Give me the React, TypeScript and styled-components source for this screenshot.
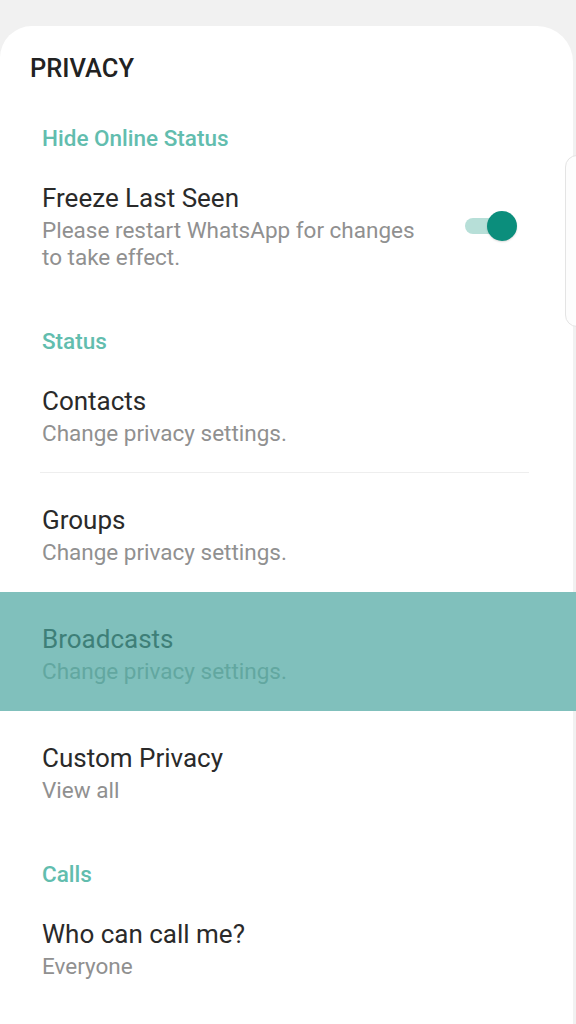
import React from "react";
import styled, { createGlobalStyle } from "styled-components";

const Global = createGlobalStyle`
  html, body { margin: 0; padding: 0; background: #f1f1f1; }
  body { font-family: Roboto, "Noto Sans", "Liberation Sans", sans-serif; -webkit-font-smoothing: antialiased; }
`;

const Page = styled.div`
  position: relative;
  width: 576px;
  height: 1024px;
  overflow: hidden;
  background: #f1f1f1;
  padding-top: 26px;
  box-sizing: border-box;
`;

const Card = styled.div`
  margin-right: 3px;
  background: #ffffff;
  border-radius: 32px 36px 0 0;
  min-height: 1000px;
`;

const EdgeTab = styled.div`
  position: absolute;
  left: 565px;
  top: 155px;
  width: 30px;
  height: 170px;
  border: 1px solid #e4e4e4;
  border-radius: 12px;
  background: #fdfdfd;
`;

const Title = styled.h1`
  margin: 0;
  padding: 31px 30px 15px;
  font-size: 25.5px;
  line-height: 22px;
  font-weight: 500;
  color: #222222;
`;

const SectionHeader = styled.div`
  padding: 33px 42px 2px;
  font-size: 22.5px;
  line-height: 22px;
  font-weight: 500;
  color: #62bdae;
`;

const Row = styled.div<{ $active?: boolean }>`
  display: flex;
  align-items: center;
  padding: 34px 56px 26px 42px;
  background: ${(p) => (p.$active ? "#80c0bc" : "transparent")};
  margin-right: ${(p) => (p.$active ? "-3px" : "0")};
`;

const Texts = styled.div`
  flex: 1;
  min-width: 0;
`;

const RowTitle = styled.div<{ $active?: boolean }>`
  font-size: 26px;
  line-height: 26px;
  color: ${(p) => (p.$active ? "#3e7f78" : "#2a2a2a")};
`;

const RowSub = styled.div<{ $active?: boolean }>`
  margin-top: 6px;
  font-size: 22.5px;
  line-height: 27px;
  color: ${(p) => (p.$active ? "#62a7a0" : "#909090")};
  max-width: 395px;
`;

const Divider = styled.div`
  height: 1px;
  margin: -1px 44px 0 40px;
  background: #eeeeee;
`;

const Switch = styled.div`
  position: relative;
  width: 52px;
  height: 30px;
  flex-shrink: 0;
  margin-top: -4px;
`;

const Track = styled.div`
  position: absolute;
  left: 0;
  top: 7px;
  width: 44px;
  height: 16px;
  border-radius: 8px;
  background: #b7dfd8;
`;

const Thumb = styled.div`
  position: absolute;
  right: 0;
  top: 0;
  width: 30px;
  height: 30px;
  border-radius: 50%;
  background: #0b8e7c;
  box-shadow: 0 1px 2px rgba(0, 0, 0, 0.15);
`;

type Item = { title: string; sub: string; active?: boolean };

const ListRow: React.FC<Item & { toggle?: boolean }> = ({ title, sub, active, toggle }) => (
  <Row $active={active}>
    <Texts>
      <RowTitle $active={active}>{title}</RowTitle>
      <RowSub $active={active}>{sub}</RowSub>
    </Texts>
    {toggle && (
      <Switch>
        <Track />
        <Thumb />
      </Switch>
    )}
  </Row>
);

export default function App() {
  return (
    <Page>
      <Global />
      <Card>
        <Title>PRIVACY</Title>
        <SectionHeader>Hide Online Status</SectionHeader>
        <ListRow
          title="Freeze Last Seen"
          sub="Please restart WhatsApp for changes to take effect."
          toggle
        />
        <SectionHeader>Status</SectionHeader>
        <ListRow title="Contacts" sub="Change privacy settings." />
        <Divider />
        <ListRow title="Groups" sub="Change privacy settings." />
        <ListRow title="Broadcasts" sub="Change privacy settings." active />
        <ListRow title="Custom Privacy" sub="View all" />
        <SectionHeader>Calls</SectionHeader>
        <ListRow title="Who can call me?" sub="Everyone" />
      </Card>
      <EdgeTab />
    </Page>
  );
}
